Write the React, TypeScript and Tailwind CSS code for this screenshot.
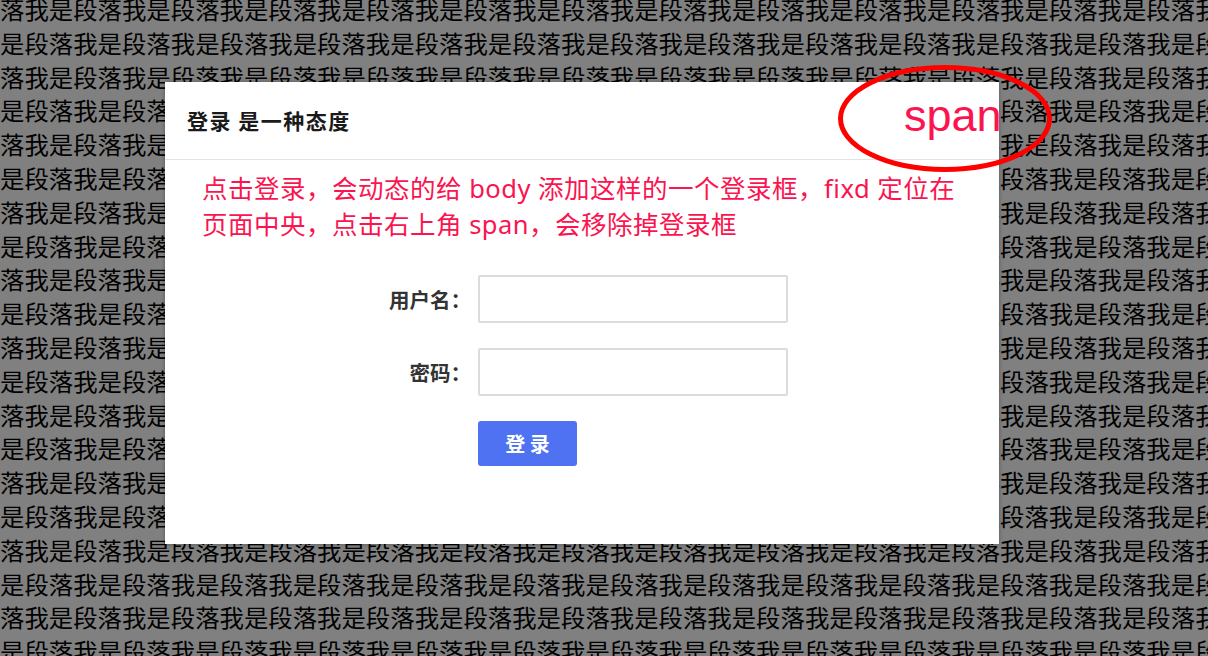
const ROW_A = '落我是段'.repeat(14)
const ROW_B = '是段落我'.repeat(14)

const cjk = "font-['Noto_Sans_CJK_SC',sans-serif]"

function Field({ label, type = 'text' }: { label: string; type?: string }) {
  return (
    <div className="flex items-center gap-[7px]">
      <label className="w-[99px] text-right text-[20.5px] font-bold text-[#333]">{label}</label>
      <input type={type} className="h-[48px] w-[310px] rounded-[2px] border-2 border-[#dcdcdc] outline-none" />
    </div>
  )
}

function LoginBox() {
  return (
    <div className={`absolute left-[165px] top-[82px] h-[462px] w-[834px] bg-white shadow-[0_0_4px_rgba(0,0,0,0.35)] ${cjk}`}>
      <div className="flex h-[78px] items-center border-b border-[#e3e3e3] pl-[22px]">
        <h2 className="text-[21px] font-bold tracking-[1.5px] text-[#1a1a1a]">登录 是一种态度</h2>
      </div>

      <div className="pl-[37px] pt-[10px] font-['Noto_Sans','Noto_Sans_CJK_SC',sans-serif] text-[25.5px] leading-[36px] tracking-[0.5px] text-[#fa1450]">
        <p>点击登录，会动态的给 body 添加这样的一个登录框，fixd 定位在</p>
        <p>页面中央，点击右上角 span，会移除掉登录框</p>
      </div>

      <form className="mt-[33px] flex flex-col gap-[25px] pl-[207px]">
        <Field label="用户名：" />
        <Field label="密码：" type="password" />
        <div className="pl-[106px]">
          <button type="button" className="h-[45px] w-[99px] rounded-[3px] bg-[#4e72f2] text-[20px] font-bold text-white">
            登 录
          </button>
        </div>
      </form>
    </div>
  )
}

export default function App() {
  const rows = Array.from({ length: 21 }, (_, i) => (i % 2 === 0 ? ROW_A : ROW_B))

  return (
    <div className="relative h-[656px] w-[1208px] overflow-hidden bg-[#808080]">
      <div className={`-mt-[8px] text-[24.4px] leading-[33.8px] text-black ${cjk}`}>
        {rows.map((r, i) => (
          <p key={i} className="whitespace-nowrap">{r}</p>
        ))}
      </div>

      <LoginBox />

      {/* close "span" + red markup circle */}
      <span className="absolute left-[904px] top-[93px] font-['Liberation_Sans',sans-serif] text-[45px] leading-[45px] text-[#fa1450]">
        span
      </span>
      <svg className="absolute left-[835px] top-[62px]" width="220" height="114" viewBox="0 0 220 114">
        <ellipse cx="110" cy="56.5" rx="104.5" ry="51" fill="none" stroke="#ff0000" strokeWidth="5" />
      </svg>
    </div>
  )
}
